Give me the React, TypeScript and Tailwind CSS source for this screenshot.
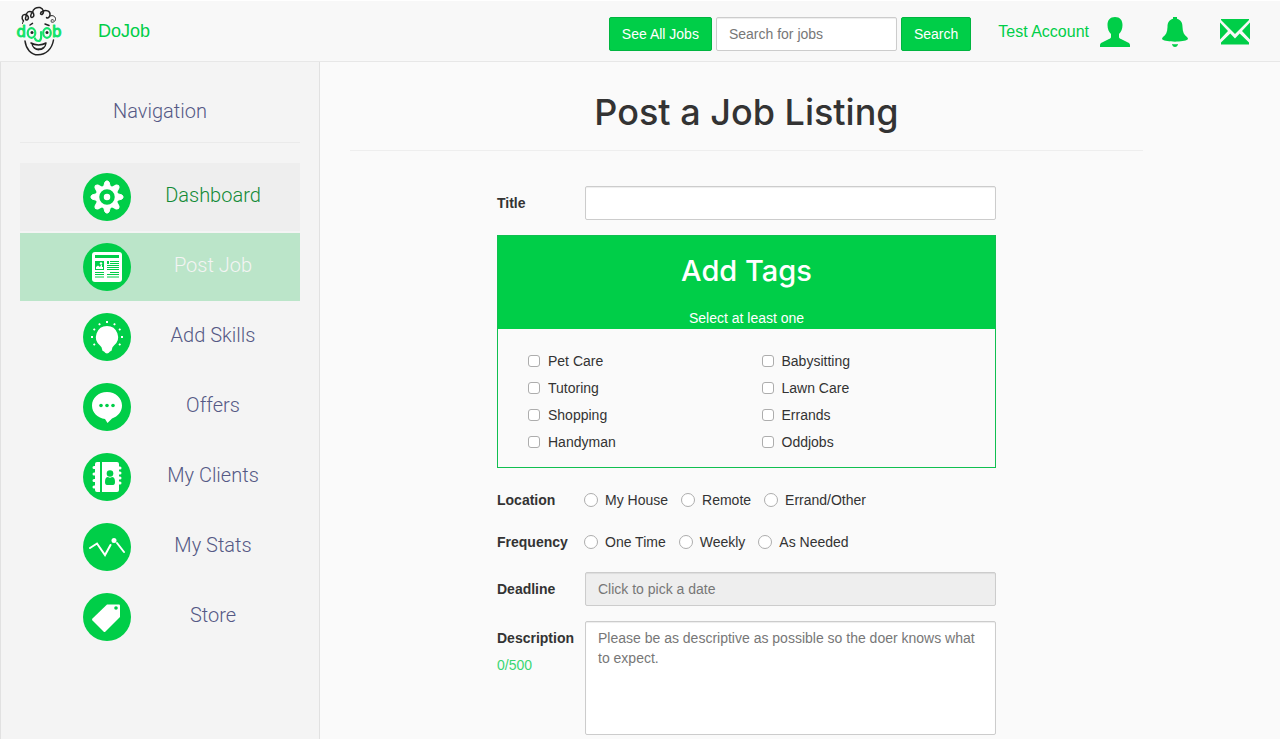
import React, { useState } from "react";

function Logo() {
  return (
    <svg width="50" height="52" viewBox="0 0 50 52" fill="none" strokeLinecap="round" strokeLinejoin="round" role="img" aria-label="DoJob logo">
      <g stroke="#222" strokeWidth="1.5">
        <path d="M9.500 16C7 13 8 9 11.500 9.500C14.500 10 15.500 14 13 15C11.500 15.500 11 13.500 12 11.500C12 7 15 5.500 18 7C20.500 8.500 20.500 12 18 12.500C16 12.500 16.500 9 18.500 7.500C19 3.500 22.500 2 26 2.500C29.500 3.500 30.500 8 28 9.500C26 10 26 7 28.500 6.500C32 4.500 36 6 36 9C36.500 12 33.500 14 32.500 12.500" />
        <path d="M36 11C39 9.500 42 12 41.500 14.500C41 17 38 18 37 16.500C36.500 15 38.500 14 39.500 15" strokeWidth="1" />
        <path d="M9.500 15.500L8.500 18.500" strokeWidth="1" />
        <path d="M16 20L18.500 18.300M31 19L35 20.500" />
        <path d="M11 36C12 44 17 49.800 24 49.800C32 49.800 38 44 39.500 35" />
        <path d="M17 38C21 40.500 28 40.500 32 38C31 46.500 19 47 18 38.500" />
        <path d="M20 42.500C23 44.500 27 44.500 30 42" strokeWidth="1" />
      </g>
      <g fill="#14e36a" stroke="#14e36a" strokeWidth="1" fontSize="15" fontFamily="DejaVu Sans, sans-serif">
        <text x="2.500" y="32">d</text>
        <text x="38" y="32">b</text>
      </g>
      <g stroke="#14e36a" strokeWidth="2.200">
        <ellipse cx="17.500" cy="28" rx="3.800" ry="4.800" />
        <ellipse cx="33" cy="28" rx="3.800" ry="4.800" />
        <path d="M27 27C27.500 31 27.500 36 24.500 36C22.500 36 21.500 35 21 33.500" />
      </g>
      <circle cx="18" cy="27.500" r="1.500" fill="#222" />
      <circle cx="33" cy="27.500" r="1.500" fill="#222" />
    </svg>
  );
}

const UserIcon = () => (
  <svg width="30" height="30" viewBox="0 0 30 30" fill="currentColor" aria-hidden="true">
    <path d="M15 0C10 0 7.500 3 7.500 8C7.500 12 8.800 15 11 17V20C11 21 10 21.600 9 22.100L2 25.600C.5 26.400 0 27 0 28.500V30H30V28.500C30 27 29.500 26.400 28 25.600L21 22.100C20 21.600 19 21 19 20V17C21.200 15 22.500 12 22.500 8C22.500 3 20 0 15 0Z" />
  </svg>
);

const BellIcon = () => (
  <svg width="26" height="30" viewBox="0 0 26 30" fill="currentColor" aria-hidden="true">
    <path d="M11 0H15V1.800C19 2.800 20.500 6 20.500 10C20.700 15 22 18 25 20C26 21 26.300 22 25.500 22.600C22 25.400 4 25.400.5 22.600C-.3 22 0 21 1 20C4 18 5.300 15 5.500 10C5.500 6 7 2.800 11 1.800Z" />
    <path d="M10 27Q13 27.600 16 27Q15.500 30 13 30Q10.500 30 10 27Z" />
  </svg>
);

const MailIcon = () => (
  <svg width="30" height="26" viewBox="0 0 30 26" fill="currentColor" aria-hidden="true">
    <path d="M1 0H29V1L15 15L1 1ZM0 3.500L8 12L0 20.500ZM30 3.500V20.500L22 12ZM1 25.500V23.500L10.300 14.500L15 19.500L19.700 14.500L29 23.500V25.500Z" />
  </svg>
);

const GearIcon = () => (
  <>
    {[0, 45, 90, 135, 180, 225, 270, 315].map((a) => (
      <path key={a} d="M20.500 14L22 9Q24 6.600 26 9L27.500 14Z" fill="#fff" stroke="#fff" strokeWidth="1" strokeLinejoin="round" transform={`rotate(${a} 24 24)`} />
    ))}
    <circle cx="24" cy="24" r="11.500" fill="#fff" />
    <circle cx="24" cy="24" r="5.500" fill="#fff" stroke="#00ce48" strokeWidth="4.500" />
  </>
);

const NewsIcon = () => (
  <>
    <rect x="9" y="9" width="30" height="30" rx="3" fill="#fff" />
    <path d="M12 12H36V15H12ZM12 18H21V27H12ZM24 18H26V21H24Z" fill="#00ce48" />
    <path d="M13 26V24L15 22.500L17 24L18 22H19V24H20V26Z" fill="#fff" />
    <circle cx="18" cy="20.500" r="1.200" fill="#fff" />
    <path d="M27 18.500H36M27 20.500H36M24 22.500H36M24 24.500H36M24 26.500H36M27 29.500H36M24 31.500H36M24 34H36M12 29.500H21M12 31.500H21M12 34H21" stroke="#00ce48" strokeWidth="1" />
  </>
);

const BulbIcon = () => (
  <>
    <path d="M24 13A11 11 0 0 1 31 32.500Q29 34 29 36Q29 38 27 38.500Q25.500 40.500 24 40.500Q22.500 40.500 21 38.500Q19 38 19 36Q19 34 17 32.500A11 11 0 0 1 24 13Z" fill="#fff" />
    <path d="M24 8V10M16 10.500L17 12M32 10.500L31 12M10.500 16L12 17M37.500 16L36 17M8 24H10M38 24H40M10.500 32L12 31M37.500 32L36 31" stroke="#fff" strokeWidth="2" />
  </>
);

const ChatIcon = () => (
  <>
    <path d="M24 9C15.500 9 9 15 9 22.500C9 30 15 35 22 36L24.500 40L29 35.500C35 33.500 39 28.500 39 22.500C39 15 32.500 9 24 9Z" fill="#fff" />
    <g fill="#00ce48">
      <circle cx="18" cy="22.500" r="1.800" />
      <circle cx="24" cy="22.500" r="1.800" />
      <circle cx="30" cy="22.500" r="1.800" />
    </g>
  </>
);

const BookIcon = () => (
  <>
    <path d="M14 9H17V39H14Q12 39 12 37V11Q12 9 14 9ZM19 9H34Q36 9 36 11V37Q36 39 34 39H19Z" fill="#fff" />
    <path d="M11 14.500H13M11 21H13M11 27.500H13M11 34H13M35 15H37M35 20H37M35 25H37M35 30H37" stroke="#fff" strokeWidth="3" strokeLinecap="round" />
    <g fill="#00ce48">
      <circle cx="27" cy="20.500" r="3.300" />
      <path d="M22 29Q22 24 25 24Q27 25.500 29 24Q32 24 32 29Q32 32 30 32H24Q22 32 22 29Z" />
    </g>
  </>
);

const StatsIcon = () => (
  <>
    <path d="M7 25L14 20.500L22 32L27.500 22M34 20L41 29" fill="none" stroke="#fff" strokeWidth="2" strokeLinecap="round" />
    <circle cx="31" cy="17.500" r="2.500" fill="#fff" />
  </>
);

const TagIcon = () => (
  <>
    <path d="M24 11.500H36Q37 11.500 37 12.500V24L22.500 38.500Q21.500 39.500 20.500 38.500L9.500 27.500Q8.500 26.500 9.500 25.500Z" fill="#fff" />
    <circle cx="33" cy="15" r="1.800" fill="#00ce48" />
  </>
);

const navItems = [
  { label: "Dashboard", Icon: GearIcon, look: "bg-[#eee] text-[#128a36]" },
  { label: "Post Job", Icon: NewsIcon, look: "bg-[#bbe5c9] text-[#f4f4f4]" },
  { label: "Add Skills", Icon: BulbIcon, look: "text-[#555985]" },
  { label: "Offers", Icon: ChatIcon, look: "text-[#555985]" },
  { label: "My Clients", Icon: BookIcon, look: "text-[#555985]" },
  { label: "My Stats", Icon: StatsIcon, look: "text-[#555985]" },
  { label: "Store", Icon: TagIcon, look: "text-[#555985]" },
];

const tags = ["Pet Care", "Babysitting", "Tutoring", "Lawn Care", "Shopping", "Errands", "Handyman", "Oddjobs"];

const field = "rounded-[2px] border border-[#ccc] px-3 text-sm text-[#555] shadow-[inset_0_1px_1px_rgba(0,0,0,0.075)] outline-none placeholder:text-[#777]";
const button = "h-[34px] rounded-[2px] border border-[#00b540] bg-[#00ce48] px-3 text-sm text-white";

function RadioRow({ legend, name, options }: { legend: string; name: string; options: string[] }) {
  return (
    <div role="radiogroup" aria-label={legend} className="flex h-5 items-center">
      <span className="w-[87px] font-bold">{legend}</span>
      <div className="flex gap-[13px]">
        {options.map((o) => (
          <label key={o} className="flex items-center gap-[7px]">
            <input type="radio" name={name} className="size-[14px] appearance-none rounded-full border border-[#adadad] bg-white checked:border-4 checked:border-[#00ce48]" />
            {o}
          </label>
        ))}
      </div>
    </div>
  );
}

export default function App() {
  const [description, setDescription] = useState("");
  return (
    <div className="flex min-h-screen flex-col bg-[#fafafa] font-['Liberation_Sans',Arial,sans-serif] text-sm text-[#333]">
      <header className="flex h-[62px] items-center border-t border-b border-t-white border-b-[#e7e7e7] bg-[#f8f8f8] pt-[2px] pr-[30px] pl-[14px] text-[#00ce48]">
        <a href="#home" aria-label="Home" className="mb-[2px]"><Logo /></a>
        <a href="#home" className="mb-[2px] ml-[34px] text-lg">DoJob</a>
        <form className="mt-1 ml-auto flex gap-1" onSubmit={(e) => e.preventDefault()}>
          <button type="button" className={button}>See All Jobs</button>
          <input aria-label="Search for jobs" placeholder="Search for jobs" className={`h-[34px] w-[181px] bg-white ${field}`} />
          <button className={button}>Search</button>
        </form>
        <a href="#account" className="ml-[27px] flex items-center gap-[11px] text-base">Test Account<UserIcon /></a>
        <a href="#notifications" aria-label="Notifications" className="ml-8"><BellIcon /></a>
        <a href="#messages" aria-label="Messages" className="ml-8"><MailIcon /></a>
      </header>

      <div className="flex flex-1">
        <aside className="w-80 shrink-0 border-x border-[#e1e1e1] bg-[#f4f4f4] px-[19px] font-[Roboto,sans-serif] text-xl font-light">
          <h2 className="border-b border-[#eaeaea] pt-[35px] pb-[17px] text-center text-[#555985]">Navigation</h2>
          <nav className="mt-5 flex flex-col gap-[2px]">
            {navItems.map(({ label, Icon, look }) => (
              <a key={label} href="#nav" className={`flex h-[68px] items-center pr-[5px] pl-[63px] ${look}`}>
                <svg width="48" height="48" viewBox="0 0 48 48" className="shrink-0" aria-hidden="true">
                  <circle cx="24" cy="24" r="24" fill="#00ce48" />
                  <Icon />
                </svg>
                <span className="flex-1 pb-1 text-center">{label}</span>
              </a>
            ))}
          </nav>
        </aside>

        <main className="mr-[137px] ml-[30px] flex-1">
          <h1 className="border-b border-[#eee] pt-[30px] pb-[18px] text-center font-[Inter,sans-serif] text-4xl leading-[40px] font-medium">Post a Job Listing</h1>
          <form className="mx-auto mt-[35px] max-w-[499px]">
            <div className="flex items-center">
              <label htmlFor="title" className="w-[88px] font-bold">Title</label>
              <input id="title" className={`h-[34px] min-w-0 flex-1 bg-white ${field}`} />
            </div>

            <section className="mt-[15px] border border-[#10bf50]">
              <div className="bg-[#00ce48] pt-[15px] pb-px text-center text-white">
                <h2 className="font-[Inter,sans-serif] text-[29px] leading-10 font-medium">Add Tags</h2>
                <p className="mt-[17px] leading-5">Select at least one</p>
              </div>
              <div className="grid grid-cols-2 gap-y-[7px] px-[30px] pt-[22px] pb-[15px]">
                {tags.map((t) => (
                  <label key={t} className="flex h-5 items-center gap-2 even:ml-[15px]">
                    <input type="checkbox" className="size-3 appearance-none rounded-[3px] border border-[#adadad] bg-white checked:bg-[#00ce48]" />
                    {t}
                  </label>
                ))}
              </div>
            </section>

            <div className="mt-[22px] flex flex-col gap-[22px]">
              <RadioRow legend="Location" name="location" options={["My House", "Remote", "Errand/Other"]} />
              <RadioRow legend="Frequency" name="frequency" options={["One Time", "Weekly", "As Needed"]} />
            </div>

            <div className="mt-5 flex items-center">
              <label htmlFor="deadline" className="w-[88px] font-bold">Deadline</label>
              <input id="deadline" readOnly placeholder="Click to pick a date" className={`h-[34px] min-w-0 flex-1 bg-[#eee] ${field}`} />
            </div>

            <div className="mt-[15px] flex">
              <div className="w-[88px] pt-[7px]">
                <label htmlFor="description" className="font-bold">Description</label>
                <p className="mt-[7px] text-[#3bd672]">{description.length}/500</p>
              </div>
              <textarea id="description" maxLength={500} value={description} onChange={(e) => setDescription(e.target.value)} placeholder="Please be as descriptive as possible so the doer knows what to expect." className={`h-[114px] min-w-0 flex-1 resize-none bg-white py-[6px] ${field}`} />
            </div>
          </form>
        </main>
      </div>
    </div>
  );
}
